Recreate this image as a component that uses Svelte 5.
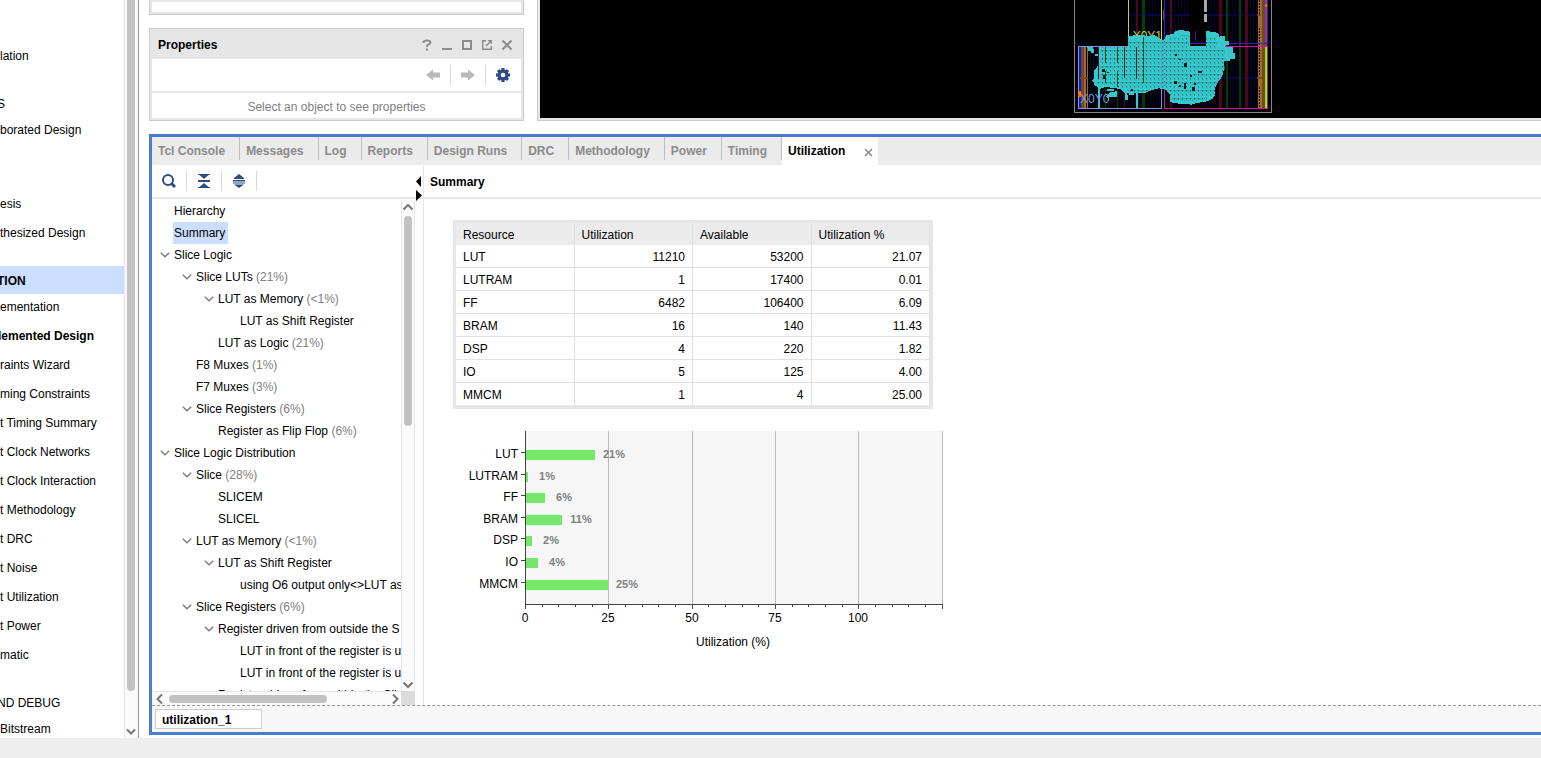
<script>
  const navGroups = [
    { items: ['lation'] },
    { heading: 'S', items: ['borated Design'] },
    { heading: '', items: ['esis', 'thesized Design'] },
    {
      heading: 'TION',
      active: true,
      items: [
        'ementation', 'lemented Design', 'raints Wizard', 'ming Constraints',
        't Timing Summary', 't Clock Networks', 't Clock Interaction', 't Methodology',
        't DRC', 't Noise', 't Utilization', 't Power', 'matic'
      ]
    },
    { heading: 'ND DEBUG', items: ['Bitstream'] }
  ];

  const tabs = ['Tcl Console', 'Messages', 'Log', 'Reports', 'Design Runs', 'DRC', 'Methodology', 'Power', 'Timing'];

  const tree = [
    { level: 0, label: 'Hierarchy' },
    { level: 0, label: 'Summary', selected: true },
    { level: 0, label: 'Slice Logic', open: true },
    { level: 1, label: 'Slice LUTs', pct: '(21%)', open: true },
    { level: 2, label: 'LUT as Memory', pct: '(<1%)', open: true },
    { level: 3, label: 'LUT as Shift Register' },
    { level: 2, label: 'LUT as Logic', pct: '(21%)' },
    { level: 1, label: 'F8 Muxes', pct: '(1%)' },
    { level: 1, label: 'F7 Muxes', pct: '(3%)' },
    { level: 1, label: 'Slice Registers', pct: '(6%)', open: true },
    { level: 2, label: 'Register as Flip Flop', pct: '(6%)' },
    { level: 0, label: 'Slice Logic Distribution', open: true },
    { level: 1, label: 'Slice', pct: '(28%)', open: true },
    { level: 2, label: 'SLICEM' },
    { level: 2, label: 'SLICEL' },
    { level: 1, label: 'LUT as Memory', pct: '(<1%)', open: true },
    { level: 2, label: 'LUT as Shift Register', open: true },
    { level: 3, label: 'using O6 output only<>LUT as' },
    { level: 1, label: 'Slice Registers', pct: '(6%)', open: true },
    { level: 2, label: 'Register driven from outside the S', open: true },
    { level: 3, label: 'LUT in front of the register is u' },
    { level: 3, label: 'LUT in front of the register is u' },
    { level: 2, label: 'Register driven from within the Slic' }
  ];

  const resources = [
    { name: 'LUT', used: '11210', avail: '53200', pct: '21.07', bar: 21 },
    { name: 'LUTRAM', used: '1', avail: '17400', pct: '0.01', bar: 1 },
    { name: 'FF', used: '6482', avail: '106400', pct: '6.09', bar: 6 },
    { name: 'BRAM', used: '16', avail: '140', pct: '11.43', bar: 11 },
    { name: 'DSP', used: '4', avail: '220', pct: '1.82', bar: 2 },
    { name: 'IO', used: '5', avail: '125', pct: '4.00', bar: 4 },
    { name: 'MMCM', used: '1', avail: '4', pct: '25.00', bar: 25 }
  ];

  // chart geometry
  const x0 = 72;
  const xAt = (v) => Math.round(x0 + (v * 416.5) / 125);
  const yAt = (i) => Math.round(22 + i * 21.6);
  const ticks = Array.from({ length: 26 }, (_, i) => i * 5);

  // device view background columns
  const range = (a, b, s) => Array.from({ length: Math.ceil((b - a) / s) }, (_, i) => a + i * s);
  const upperCols = [...range(212, 300, 9), ...range(318, 390, 9), ...range(443, 594, 9)];
  const lowerCols = [...range(90, 300, 9), ...range(320, 594, 9)];
</script>

<div class="app">
  <div class="work">
    <nav class="flow" aria-label="Flow">
      <div class="flow-list">
        {#each navGroups as g}
          <section>
            {#if g.heading !== undefined}<h3 class:active={g.active}>{g.heading}</h3>{/if}
            <ul>
              {#each g.items as it}
                <li class:bold={it === 'lemented Design'}><a href="#top">{it}</a></li>
              {/each}
            </ul>
          </section>
        {/each}
      </div>
      <div class="flow-scroll">
        <div class="thumb"></div>
        <svg width="12" height="12" viewBox="0 0 12 12"><path d="M2 3.5 6 7.5 10 3.5" fill="none" stroke="#777" stroke-width="2" /></svg>
      </div>
    </nav>

    <main>
      <div class="top">
        <div class="side">
          <section class="panel upper"></section>
          <section class="panel props">
            <header>
              <h2>Properties</h2>
              <button aria-label="Help"><svg width="12" height="12" viewBox="0 0 12 12"><path d="M2.5 4V3.2Q2.6 1.5 6 1.5T9.5 3.6Q9.5 5 7.4 5.5 6 6 6 8M5 10.5H7" fill="none" stroke="#8c8c8c" stroke-width="2" /></svg></button>
              <button aria-label="Minimize"><svg width="12" height="12" viewBox="0 0 12 12"><path d="M1 10H11" stroke="#8c8c8c" stroke-width="2" /></svg></button>
              <button aria-label="Maximize"><svg width="12" height="12" viewBox="0 0 12 12"><rect x="2" y="2" width="8" height="8" fill="none" stroke="#8c8c8c" stroke-width="2" /></svg></button>
              <button aria-label="Float"><svg width="12" height="12" viewBox="0 0 12 12"><path d="M5 1.700H1.700V10.300H10.300V7M5 7 9 3" fill="none" stroke="#8c8c8c" stroke-width="1.500" /><path d="M6.500 1H11V5.500Z" fill="#8c8c8c" /></svg></button>
              <button aria-label="Close"><svg width="12" height="12" viewBox="0 0 12 12"><path d="M1.500 1.500 10.500 10.500M10.500 1.500 1.500 10.500" stroke="#8c8c8c" stroke-width="2" /></svg></button>
            </header>
            <div class="props-tools">
              <button aria-label="Back"><svg width="14" height="12" viewBox="0 0 14 12"><path d="M0 6 7 .5V3.500H14V8.500H7V11.500Z" fill="#b9b9b9" /></svg></button>
              <i></i>
              <button aria-label="Forward"><svg width="14" height="12" viewBox="0 0 14 12"><path d="M14 6 7 .5V3.500H0V8.500H7V11.500Z" fill="#b9b9b9" /></svg></button>
              <i></i>
              <button aria-label="Settings"><svg width="14" height="14" viewBox="-7 -7 14 14"><g fill="#2f4b85">{#each [0, 45, 90, 135] as a}<rect x="-1.600" y="-7" width="3.200" height="14" transform="rotate({a})" />{/each}<circle r="5.400" /></g><circle r="2.300" fill="#fff" /></svg></button>
            </div>
            <p>Select an object to see properties</p>
          </section>
        </div>

        <section class="device" aria-label="Device">
          <svg width="220" height="118" viewBox="0 0 660 354" shape-rendering="crispEdges">
            <defs>
              <pattern id="cells" width="12" height="24" patternUnits="userSpaceOnUse" x="3" y="4">
                <rect x="0" y="3" width="12" height="3" fill="#2ba5ac" />
                <rect x="3" y="3" width="3" height="3" fill="#06252c" />
                <rect x="3" y="15" width="3" height="3" fill="#0e4650" />
                <rect x="9" y="9" width="3" height="3" fill="#2ba5ac" />
              </pattern>
            </defs>
            {#each upperCols as x}<rect {x} y="0" width="3" height="138" fill="#04042c" />{/each}
            {#each lowerCols as x}<rect {x} y="141" width="3" height="183" fill="#04042c" />{/each}
            <path d="M207 43H390V48H207ZM438 43H606V48H438ZM60 231H606V236H60Z" fill="#060640" />
            <path d="M227 0H234V324H227ZM330 0H336V324H330ZM477 0H486V324H477ZM555 0H564V324H555ZM114 141H117V324H114ZM192 141H195V324H192Z" fill="#4b0815" />
            <path d="M247 0H255V324H247ZM497 0H504V324H497ZM537 0H543V324H537ZM135 141H138V324H135ZM171 141H174V324H171Z" fill="#043d08" />
            <rect x="309" y="30" width="4" height="30" fill="#7b3f10" />
            <path d="M432 0H441V37H432ZM432 42H441V66H432Z" fill="#aaa" />
            <path d="M594 0H606V324H594Z" fill="#a46c27" />
            <path d="M599 0V42M599 84V228M599 261V324" stroke="#111" stroke-width="3" stroke-dasharray="5 4" />
            <path d="M606 0H615V324H606Z" fill="#6b4c27" />
            <path d="M615 0H622V139H615Z" fill="#8a3c80" />
            <path d="M615 12H621V21H615Z" fill="#ff6a10" />
            <path d="M57 141H63V324H57Z" fill="#1414c8" />
            <path d="M63 141H71V324H63Z" fill="#6b4c27" />
            <path d="M72 141H79V324H72Z" fill="#a46c27" />
            <path d="M83 141V324" stroke="#a46c27" stroke-width="3" />
            <path d="M60 231H84V236H60ZM592 231H606V236H592ZM592 43H604V48H592Z" fill="#7b4a10" />
            <path d="M43.500 0V337.500H634.500V0" fill="none" stroke="#858585" stroke-width="3" />
            <path d="M205.500 0V139M304.500 0V139" stroke="#c3d048" stroke-width="3" />
            <path d="M313.500 0V130M390 130.500H622.500V0M404 94H406V124" fill="none" stroke="#4512c8" stroke-width="3" />
            <text x="218" y="120" font-size="36" fill="#c3d048">X0Y1</text>
            <path d="M204 108H216L224 105 232 108 240 104 262 108 284 105 296 114 310 122 318 110 320 105 340 102 344 95 360 90 388 94 391 103V138H438V94L462 95 475 100 478 112 482 108H494V124H508V134H498V142H518V158H524V178H510V184H492V208L486 230 474 246 466 262V284L458 296 440 304 408 310 396 314 366 311 342 310 330 304V282L314 268 296 265 276 270 252 280 234 278V324H228V278L212 280 200 278V300H195V282L186 270 174 266 158 264 146 262 138 260 121 266V324H114V262L104 256 100 244 96 244 102 234V210L108 205 115 195V141H204Z" fill="#35c9cb" />
            <path d="M204 120H300L318 120 344 108 388 104V150H438V110H475V150H494V208L474 246 466 262V284L440 296 396 306 342 304 330 290V282L314 268 296 265 276 270 252 276 212 276 186 266 138 256 110 250V210L120 195V141H204Z" fill="url(#cells)" />
            <path d="M82 142H98V148H103V158H92V152H84ZM106 162H113V168H106ZM138 288 150 276 172 274V290H146V300ZM142 268H162V273H142ZM196 284H204V300H196ZM206 280H222V286H206Z" fill="#35c9cb" />
            <path d="M126 208H135V216H126ZM130 226H135V236H130ZM140 216H146V220H140ZM346 163H352V168H346ZM356 176H362V181H356ZM372 189H381V201H372ZM414 214H426V220H414ZM390 226H396V232H390ZM342 244H352V252H342ZM356 254H364V262H356ZM372 250H378V266H372ZM396 262H404V274H396ZM402 250H408V256H402ZM212 266H220V272H212Z" fill="#03171c" />
            <path d="M115.500 141V237M193.500 141V234M229.500 141V237" stroke="#5c1420" stroke-width="3" />
            <path d="M136.500 141V190M136.500 212V248M172.500 141V190M172.500 212V262M250.500 110V250" stroke="#0b4d18" stroke-width="3" />
            <path d="M313.500 124V270" stroke="#d8109c" stroke-width="3" stroke-dasharray="3 9" />
            <path d="M313.500 270V325.500H622.500V139.500H495" fill="none" stroke="#d8109c" stroke-width="3" />
            <path d="M204 139.500H55.500V325.500H304.500V268" fill="none" stroke="#8095de" stroke-width="3" />
            <path d="M304.500 141V268" stroke="#56a9d2" stroke-width="3" />
            <path d="M615 141H621V324H615Z" fill="#86f010" />
            <path d="M54 273H63V291H54Z" fill="#ff6a10" />
            <text x="60" y="310" font-size="36" fill="#8095de">X0Y0</text>
          </svg>
        </section>
      </div>

      <section class="results">
        <div class="tabs" role="tablist">
          {#each tabs as t}<button role="tab" aria-selected="false"><span>{t}</span></button>{/each}
          <div class="tab-active">
            <button role="tab" aria-selected="true">Utilization</button>
            <button aria-label="Close tab" class="x"><svg width="9" height="9" viewBox="0 0 9 9"><path d="M1 1 8 8M8 1 1 8" stroke="#8a8a8a" stroke-width="1.500" /></svg></button>
          </div>
        </div>

        <div class="split">
          <div class="left">
            <div class="tools">
              <button aria-label="Search"><svg width="16" height="16" viewBox="0 0 16 16"><circle cx="7" cy="7" r="5" fill="none" stroke="#2f4b85" stroke-width="2" /><path d="M10.500 10.500 14 14" stroke="#2f4b85" stroke-width="3" /></svg></button><i></i>
              <button aria-label="Collapse all"><svg width="16" height="16" viewBox="0 0 16 16"><path d="M2 1H14V2H12.500L8 6 3.500 2H2ZM2 7H14V9H2ZM8 10 12.500 14H14V15H2V14H3.500Z" fill="#2f4b85" /></svg></button><i></i>
              <button aria-label="Expand all"><svg width="16" height="16" viewBox="0 0 16 16"><path d="M8 1 13 5V6H3V5ZM2 7H14V8.500H2ZM2 9.500H14V10.500H2ZM3 11.500H13L8 15Z" fill="#2f4b85" /></svg></button><i></i>
            </div>
            <div class="tree-wrap">
              <ul class="tree">
                {#each tree as n}
                  <li style="padding-left: {n.level * 22 + 5}px">
                    {#if n.open}
                      <button aria-label="Collapse"><svg width="10" height="6" viewBox="0 0 10 6"><path d="M.8.8 5 4.800 9.200.8" fill="none" stroke="#7a7a7a" stroke-width="1.400" /></svg></button>
                    {:else}<b></b>{/if}
                    <span class:selected={n.selected}>{n.label}{#if n.pct}<em>{' ' + n.pct}</em>{/if}</span>
                  </li>
                {/each}
              </ul>
              <div class="vscroll">
                <svg width="12" height="12" viewBox="0 0 12 12"><path d="M1.500 8.500 6 4 10.500 8.500" fill="none" stroke="#777" stroke-width="2" /></svg>
                <div class="thumb"></div>
                <svg width="12" height="12" viewBox="0 0 12 12"><path d="M1.500 3.500 6 8 10.500 3.500" fill="none" stroke="#777" stroke-width="2" /></svg>
              </div>
              <div class="hscroll">
                <svg width="12" height="12" viewBox="0 0 12 12"><path d="M8 1.500 3.500 6 8 10.500" fill="none" stroke="#777" stroke-width="2" /></svg>
                <div class="thumb"></div>
                <svg width="12" height="12" viewBox="0 0 12 12"><path d="M4 1.500 8.500 6 4 10.500" fill="none" stroke="#777" stroke-width="2" /></svg>
              </div>
              <div class="corner"></div>
            </div>
            <svg class="collapse" width="7" height="26" viewBox="0 0 7 26"><path d="M5 0V11L0 5.500ZM0 14V25L6 19.500Z" /></svg>
          </div>

          <div class="right">
            <h2>Summary</h2>
            <div class="content">
              <table>
                <thead><tr><th>Resource</th><th>Utilization</th><th>Available</th><th>Utilization %</th></tr></thead>
                <tbody>
                  {#each resources as r}
                    <tr><td>{r.name}</td><td>{r.used}</td><td>{r.avail}</td><td>{r.pct}</td></tr>
                  {/each}
                </tbody>
              </table>

              <svg class="chart" width="492" height="224" viewBox="0 0 492 224">
                <rect x={x0} y="0" width="418" height="173" fill="#f6f6f6" />
                {#each [25, 50, 75, 100, 125] as v}
                  <rect x={xAt(v)} y="0" width="1" height="173" fill="#b8b8b8" />
                {/each}
                {#each resources as r, i}
                  <rect x={x0 + 1} y={yAt(i) - 3} width={xAt(r.bar) - x0 - 1} height="10" fill="#75e769" />
                  <rect x={x0 - 4} y={yAt(i) - 1} width="4" height="1" fill="#444" />
                  <text x={x0 - 7} y={yAt(i) + 5} text-anchor="end">{r.name}</text>
                  <text class="val" x={xAt(r.bar) + 19} y={yAt(i) + 5} text-anchor="middle">{r.bar}%</text>
                {/each}
                <rect x={x0} y="0" width="1" height="174" fill="#444" />
                <rect x={x0} y="173" width="418" height="1" fill="#444" />
                {#each ticks as v}
                  <rect x={xAt(v)} y="174" width="1" height={v % 25 ? 2 : 4} fill="#444" />
                  {#if v % 25 === 0 && v < 125}<text x={xAt(v)} y="191" text-anchor="middle">{v}</text>{/if}
                {/each}
                <text x="280" y="215" text-anchor="middle">Utilization (%)</text>
              </svg>
            </div>
          </div>
        </div>

        <footer><button>utilization_1</button></footer>
      </section>
    </main>
  </div>
  <div class="status"></div>
</div>

<style>
  :global(body) { margin: 0; }
  .app {
    display: flex; flex-direction: column; height: 100vh; overflow: hidden;
    font: 12px/16px "Liberation Sans", Arial, sans-serif; color: #000; background: #fff;
  }
  .app * { box-sizing: border-box; }
  button { font: inherit; color: inherit; background: none; border: 0; padding: 0; display: flex; align-items: center; justify-content: center; }
  ul { list-style: none; margin: 0; padding: 0; }
  h2, h3, p { margin: 0; font-size: 12px; }
  svg { display: block; flex: none; }
  .work { flex: 1; min-height: 0; display: flex; }
  .status { height: 20px; background: #eee; flex: none; }

  .flow { width: 139px; flex: none; display: flex; border-right: 1px solid #999; overflow: hidden; }
  .flow-list { flex: 1; padding-top: 42px; overflow: hidden; white-space: nowrap; }
  .flow section { margin-bottom: 18px; }
  .flow h3 { height: 28px; line-height: 30px; font-weight: normal; text-indent: -3px; }
  .flow h3.active { background: #ccdeff; font-weight: bold; }
  .flow h3 + ul { margin-top: -1px; }
  .flow li { height: 29px; line-height: 29px; }
  .flow a { color: inherit; text-decoration: none; }
  .flow .bold { font-weight: bold; text-indent: -2px; }
  .flow-scroll { width: 14px; border-left: 1px solid #e6e6e6; background: #fafafa; display: flex; flex-direction: column; justify-content: space-between; align-items: center; padding-right: 1px; }
  .flow-scroll .thumb { width: 8px; height: 691px; border-radius: 0 0 4px 4px; background: #c2c2c2; }

  main { flex: 1; min-width: 0; display: flex; flex-direction: column; padding: 0 0 3px 10px; }
  .top { display: flex; height: 121px; gap: 13px; flex: none; margin-bottom: 13px; }
  .side { width: 375px; display: flex; flex-direction: column; gap: 13px; }
  .panel { border: 1px solid #ccc; background: #fff; padding: 2px; outline: 0; background-clip: content-box; box-shadow: inset 0 0 0 2px #e6e6e6; }
  .upper { height: 15px; border-top: 0; }
  .props { flex: 1; display: flex; flex-direction: column; padding-top: 0; }
  .props header { height: 30px; background: #e6e6e6; display: flex; align-items: center; gap: 8px; padding: 2px 8px 0 6px; }
  .props h2 { flex: 1; }
  .props-tools { height: 34px; border-bottom: 2px solid #e6e6e6; display: flex; align-items: center; justify-content: flex-end; gap: 10px; padding-right: 11px; }
  i { width: 1px; height: 20px; background: #d9d9d9; }
  .props p { flex: 1; display: flex; align-items: center; justify-content: center; color: #808080; padding-top: 2px; }
  .device { flex: 1; border: solid #ccc; border-width: 0 0 1px 1px; box-shadow: inset 2px -2px 0 #e6e6e6; padding: 0 0 2px 2px; background: #000 content-box; overflow: hidden; }
  .device svg { margin-left: 520px; }

  .results { flex: 1; min-height: 0; border: 3px solid #4a7bcf; border-right: 0; display: flex; flex-direction: column; }
  .tabs { height: 28px; flex: none; display: flex; background: #ebebeb; font-weight: bold; color: #8a8a8a; }
  .tabs > button { height: 23px; padding: 6px 14px 0 6px; align-items: flex-start; border-right: 1px solid #bebebe; }
  .tab-active { display: flex; background: #fff; color: #000; padding: 6px 5px 0 6px; gap: 19px; align-items: flex-start; }
  .tab-active .x { height: 18px; }
  .split { flex: 1; min-height: 0; display: flex; }
  .left { position: relative; width: 272px; flex: none; display: flex; flex-direction: column; border-right: 1px solid #e6e6e6; }
  .tools { height: 34px; flex: none; display: flex; align-items: center; gap: 9px; padding-left: 9px; border-bottom: 2px solid #e6e6e6; }
  .collapse { position: absolute; right: 0; top: 11px; }
  .tree-wrap { flex: 1; min-height: 0; margin-right: 8px; display: grid; grid-template-columns: 1fr 14px; grid-template-rows: 1fr 14px; }
  .tree { overflow: hidden; min-height: 0; min-width: 0; padding-top: 1px; }
  .tree li { height: 22px; display: flex; align-items: center; white-space: nowrap; }
  .tree li button, .tree li b { width: 15px; height: 22px; flex: none; }
  .tree li span { line-height: 22px; padding: 0 3px 0 1px; margin-left: 1px; }
  .tree .selected { background: #ccdeff; }
  em { font-style: normal; color: #808080; white-space: pre; }
  .vscroll { border: solid #e6e6e6; border-width: 0 1px; background: #fafafa; display: flex; flex-direction: column; align-items: center; padding: 2px 0 0; min-height: 0; }
  .vscroll .thumb { width: 8px; height: 210px; margin: 3px 0 auto; border-radius: 4px; background: #c2c2c2; }
  .hscroll { border-top: 1px solid #e6e6e6; background: #fafafa; display: flex; align-items: center; padding: 0 0 0 2px; }
  .hscroll .thumb { height: 8px; width: 158px; margin: 0 auto 0 3px; border-radius: 4px; background: #c2c2c2; }
  .corner { background: #dcdcdc; }
  .right { flex: 1; min-width: 0; }
  .right h2 { height: 34px; line-height: 34px; padding-left: 6px; border-bottom: 2px solid #e6e6e6; }
  .content { padding: 21px 29px; }
  table { border-collapse: separate; border-spacing: 0; table-layout: fixed; width: 480px; border: solid #e6e6e6; border-width: 3px 3px 4px; }
  th, td { height: 23px; line-height: 16px; padding: 2px 7px 0; font-weight: normal; text-align: right; border: solid #e1e1e1; border-width: 0 1px 1px 0; }
  th { height: 22px; background: #ebebeb; text-align: left; border-bottom: 0; }
  td:first-child { text-align: left; }
  tr:last-child td { border-bottom: 0; height: 22px; }
  .chart { margin-top: 22px; overflow: visible; }
  .val { font-size: 11px; font-weight: bold; fill: #808080; }
  footer { height: 27px; flex: none; border-top: 1px dashed #999; background: #f7f7f7; padding: 3px; }
  footer button { width: 107px; height: 20px; background: #fff; border: 1px solid #ccc; font-weight: bold; justify-content: flex-start; padding: 1px 6px 0; }
</style>
